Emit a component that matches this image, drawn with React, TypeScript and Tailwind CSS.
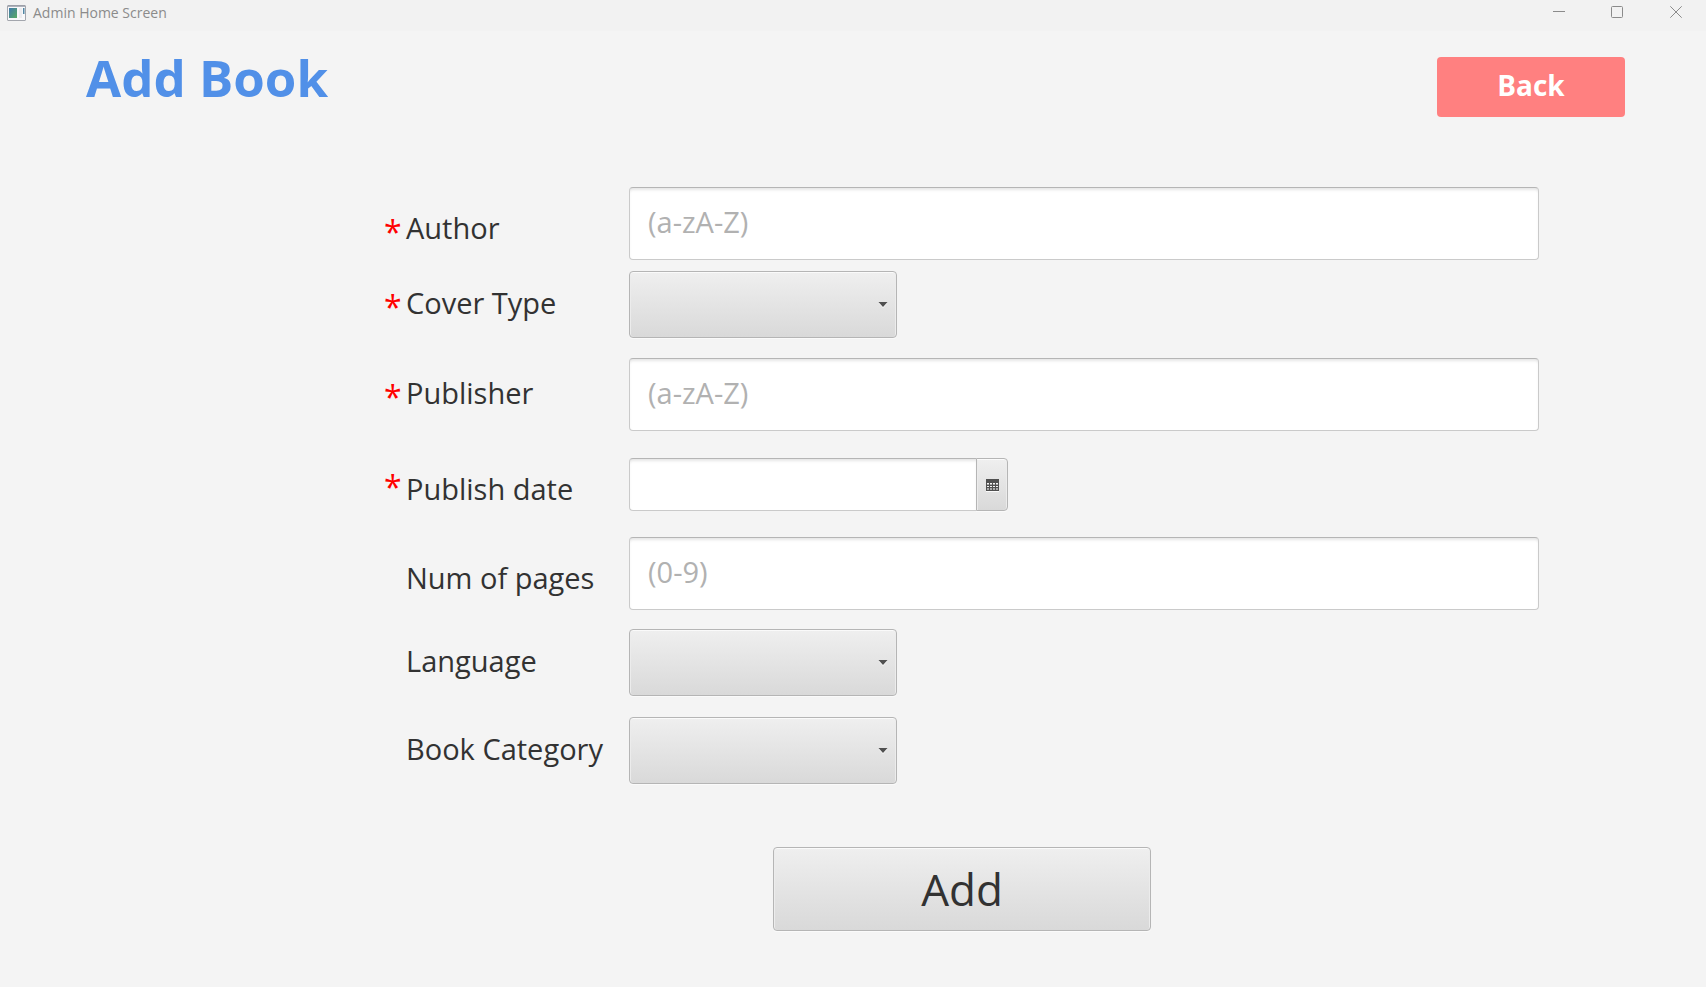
import type { ReactNode } from "react";

const raised =
  "rounded-[4px] border border-[#b5b5b5] bg-linear-to-b from-[#efefef] to-[#d9d9d9] shadow-[inset_0_1px_0_#fafafa,inset_1px_0_0_#ececec,inset_-1px_0_0_#ececec,0_1px_0_#fafafa]";
const field =
  "border border-[#cacaca] border-t-[#b5b5b5] bg-white text-[29px] text-[#323232] placeholder:text-[#b1b1b1] placeholder:opacity-100 shadow-[inset_0_3px_3px_-1px_#e6e6e6] outline-none";

type RowProps = {
  id: string;
  label: string;
  required?: boolean;
  low?: boolean;
  lowStar?: boolean;
  className?: string;
  children: ReactNode;
};

function Row({ id, label, required, low, lowStar, className, children }: RowProps) {
  return (
    <div className={`flex items-center ${className ?? ""}`}>
      <span
        aria-hidden="true"
        className={`w-[22px] shrink-0 text-[32px] leading-9 text-[#ff0000] ${lowStar ? "pt-4" : "pt-1"}`}
      >
        {required ? "*" : ""}
      </span>
      <label
        htmlFor={id}
        className={`w-[223px] shrink-0 whitespace-nowrap text-[29px] leading-9 ${low ? "pt-2" : "pb-1"}`}
      >
        {label}
      </label>
      {children}
    </div>
  );
}

function TextField({ id, placeholder }: { id: string; placeholder: string }) {
  return (
    <input
      id={id}
      type="text"
      placeholder={placeholder}
      className={`h-[73px] min-w-0 flex-1 rounded-[4px] px-[18px] pb-1 ${field}`}
    />
  );
}

function Dropdown({ id }: { id: string }) {
  return (
    <div className="relative">
      <select id={id} className={`block h-[67px] w-[268px] appearance-none ${raised}`}>
        <option value=""></option>
      </select>
      <svg
        viewBox="0 0 10 6"
        className="pointer-events-none absolute top-[31px] right-[9px] h-[6px] w-[10px]"
        aria-hidden="true"
      >
        <path d="M0.5 1L5 6L9.5 1Z" fill="#fafafa" />
        <path d="M0.5 0H9.5L5 5Z" fill="#505050" />
      </svg>
    </div>
  );
}

function DateField({ id }: { id: string }) {
  return (
    <div className="flex h-[53px] w-[379px]">
      <input id={id} type="text" className={`min-w-0 flex-1 rounded-l-[4px] border-r-0 px-[18px] ${field}`} />
      <button
        type="button"
        aria-label="Open calendar"
        className={`flex w-8 items-center justify-center rounded-l-none! pt-[2px] ${raised}`}
      >
        <svg viewBox="0 0 13 13" className="h-[13px] w-[13px]" aria-hidden="true">
          <path d="M0 0H13V12H0Z" fill="#505050" />
          <path d="M0 12H13V13H0Z" fill="#fafafa" />
          <path
            d="M1 4h2v1h-2zM4 4h2v1h-2zM7 4h2v1h-2zM10 4h2v1h-2zM1 7h2v1h-2zM4 7h2v1h-2zM7 7h2v1h-2zM10 7h2v1h-2z"
            fill="#f4f4f4"
          />
          <path
            d="M1 5h2v1h-2zM4 5h2v1h-2zM7 5h2v1h-2zM10 5h2v1h-2zM1 9h2v2h-2zM4 9h2v2h-2zM7 9h2v2h-2zM10 9h2v2h-2z"
            fill="#a8a8a8"
          />
        </svg>
      </button>
    </div>
  );
}

function TitleBar() {
  return (
    <header className="flex h-[31px] items-start justify-between bg-[#f2f2f2] text-[#8b8b8b]">
      <div className="flex h-[26px] items-center gap-[7px] pl-[7px]">
        <svg viewBox="0 0 19 16" className="h-4 w-[19px]" aria-hidden="true">
          <defs>
            <linearGradient id="pane" x1="0" y1="0" x2="1" y2="1">
              <stop offset="0" stopColor="#4179ad" />
              <stop offset="1" stopColor="#58ab63" />
            </linearGradient>
          </defs>
          <rect x="0.5" y="0.5" width="18" height="15" rx="0.5" fill="#f8f8fa" stroke="#a3a6ad" />
          <path d="M1 1.2H18" stroke="#8d939f" />
          <rect x="2" y="3" width="8" height="10" fill="url(#pane)" />
          <rect x="12" y="3" width="3" height="10" fill="#ececef" />
          <rect x="16" y="3" width="1.5" height="6" fill="#5288a5" />
        </svg>
        <span className="text-sm">Admin Home Screen</span>
      </div>
      <div className="flex h-6 items-center">
        <button type="button" aria-label="Minimize" className="flex h-6 w-[58px] items-center justify-center">
          <svg viewBox="0 0 12 12" className="h-3 w-3" aria-hidden="true">
            <path d="M0 5.5H12" stroke="#8b8b8b" />
          </svg>
        </button>
        <button type="button" aria-label="Maximize" className="flex h-6 w-[58px] items-center justify-center">
          <svg viewBox="0 0 12 12" className="h-3 w-3" aria-hidden="true">
            <rect x="0.5" y="0.5" width="11" height="11" rx="1" fill="none" stroke="#8b8b8b" />
          </svg>
        </button>
        <button type="button" aria-label="Close" className="flex h-6 w-[60px] items-center justify-center">
          <svg viewBox="0 0 12 12" className="h-3 w-3" aria-hidden="true">
            <path d="M0.3 0.3L11.7 11.7M11.7 0.3L0.3 11.7" stroke="#8b8b8b" />
          </svg>
        </button>
      </div>
    </header>
  );
}

export default function App() {
  return (
    <div className="min-h-screen bg-[#f4f4f4] font-['Open_Sans','Noto_Sans',sans-serif] text-[#323232]">
      <TitleBar />
      <main>
        <div className="flex items-start justify-between pt-[12px] pr-[81px] pl-[86px]">
          <h1 className="text-[51px] leading-[68px] font-bold text-[#5190e8]">Add Book</h1>
          <button
            type="button"
            className="mt-[14px] h-[60px] w-[188px] rounded-[4px] bg-[#ff8080] pb-1 text-[28px] font-bold text-white"
          >
            Back
          </button>
        </div>
        <form className="pt-[70px] pr-[167px] pb-14 pl-[384px]" onSubmit={(e) => e.preventDefault()}>
          <Row id="author" label="Author" required low lowStar>
            <TextField id="author" placeholder="(a-zA-Z)" />
          </Row>
          <Row id="cover" label="Cover Type" required className="mt-[11px]">
            <Dropdown id="cover" />
          </Row>
          <Row id="publisher" label="Publisher" required className="mt-5">
            <TextField id="publisher" placeholder="(a-zA-Z)" />
          </Row>
          <Row id="date" label="Publish date" required low className="mt-[27px]">
            <DateField id="date" />
          </Row>
          <Row id="pages" label="Num of pages" low className="mt-[26px]">
            <TextField id="pages" placeholder="(0-9)" />
          </Row>
          <Row id="language" label="Language" className="mt-[19px]">
            <Dropdown id="language" />
          </Row>
          <Row id="category" label="Book Category" className="mt-[21px]">
            <Dropdown id="category" />
          </Row>
          <div className="mt-[63px] pl-[389px]">
            <button type="submit" className={`h-[84px] w-[378px] text-[44px] leading-none ${raised}`}>
              Add
            </button>
          </div>
        </form>
      </main>
    </div>
  );
}
